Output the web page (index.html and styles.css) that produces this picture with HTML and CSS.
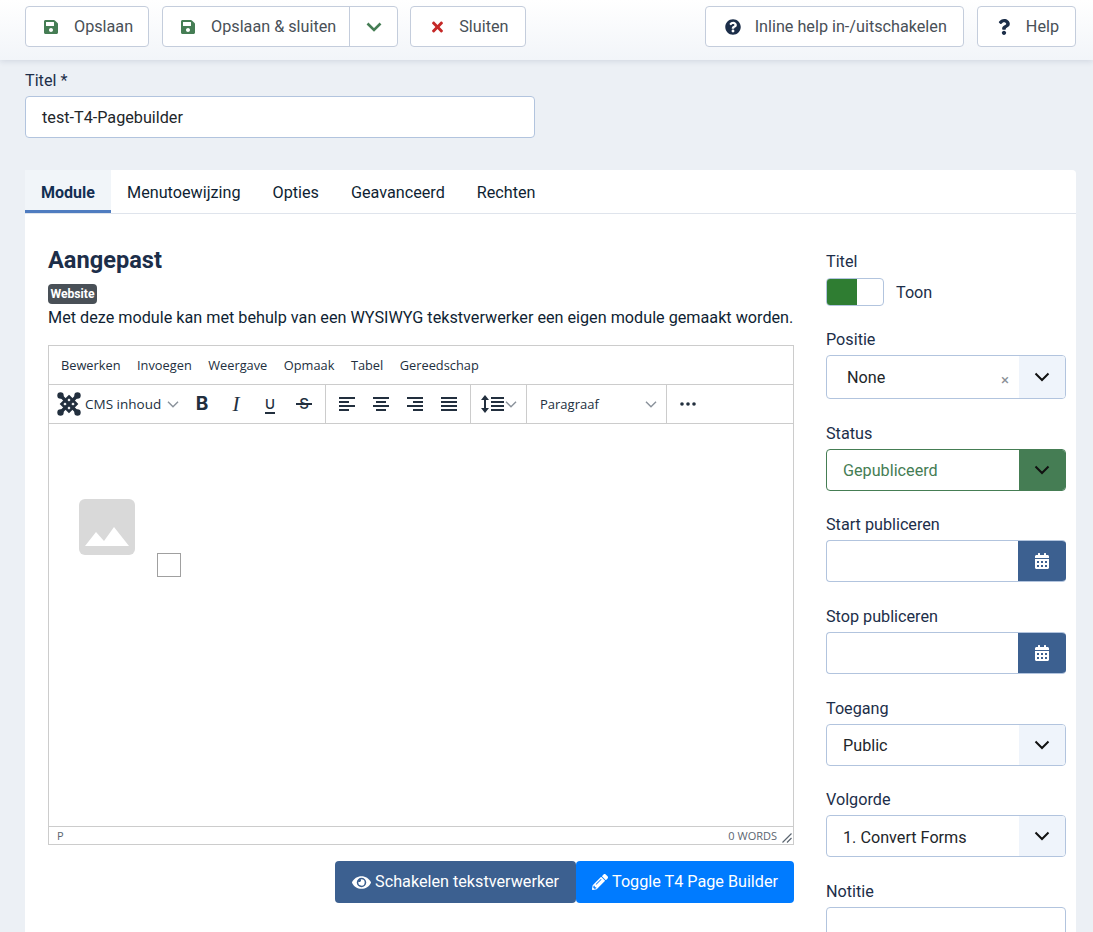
FILE: index.html
```html
<!DOCTYPE html>
<html lang="nl">
<head>
<meta charset="utf-8">
<title>Module bewerken</title>
<link rel="stylesheet" href="styles.css">
</head>
<body>
<svg class="defs" width="0" height="0" aria-hidden="true">
  <symbol id="i-save" viewBox="0 0 448 512"><path d="M433.941 129.941l-83.882-83.882A48 48 0 0 0 316.118 32H48C21.49 32 0 53.49 0 80v352c0 26.51 21.49 48 48 48h352c26.51 0 48-21.49 48-48V163.882a48 48 0 0 0-14.059-33.941zM224 416c-35.346 0-64-28.654-64-64 0-35.346 28.654-64 64-64s64 28.654 64 64c0 35.346-28.654 64-64 64zm96-304.52V212c0 6.627-5.373 12-12 12H76c-6.627 0-12-5.373-12-12V108c0-6.627 5.373-12 12-12h228.52c3.183 0 6.235 1.264 8.485 3.515l3.48 3.48A11.996 11.996 0 0 1 320 111.48z"/></symbol>
  <symbol id="i-cal" viewBox="0 0 448 512"><path d="M0 464c0 26.5 21.5 48 48 48h352c26.5 0 48-21.500 48-48V192H0v272zm320-196c0-6.600 5.400-12 12-12h40c6.600 0 12 5.400 12 12v40c0 6.600-5.400 12-12 12h-40c-6.600 0-12-5.400-12-12v-40zm0 128c0-6.600 5.400-12 12-12h40c6.600 0 12 5.400 12 12v40c0 6.600-5.400 12-12 12h-40c-6.600 0-12-5.400-12-12v-40zM192 268c0-6.600 5.400-12 12-12h40c6.600 0 12 5.400 12 12v40c0 6.600-5.400 12-12 12h-40c-6.600 0-12-5.400-12-12v-40zm0 128c0-6.600 5.400-12 12-12h40c6.600 0 12 5.400 12 12v40c0 6.600-5.400 12-12 12h-40c-6.600 0-12-5.400-12-12v-40zM64 268c0-6.600 5.400-12 12-12h40c6.600 0 12 5.400 12 12v40c0 6.600-5.400 12-12 12H76c-6.600 0-12-5.400-12-12v-40zm0 128c0-6.600 5.400-12 12-12h40c6.600 0 12 5.400 12 12v40c0 6.600-5.400 12-12 12H76c-6.600 0-12-5.400-12-12v-40zM400 64h-48V16c0-8.800-7.200-16-16-16h-32c-8.800 0-16 7.200-16 16v48H160V16c0-8.800-7.200-16-16-16h-32c-8.800 0-16 7.200-16 16v48H48C21.500 64 0 85.500 0 112v48h448v-48c0-26.500-21.500-48-48-48z"/></symbol>
  <symbol id="i-chev" viewBox="0 0 16 10"><path d="M1.500 1.500 8 8l6.500-6.500" fill="none" stroke="currentColor"/></symbol>
  <symbol id="i-tchev" viewBox="0 0 10 6"><path d="M.7.7 5 5 9.300.7" fill="none" stroke="currentColor" stroke-width="1.200"/></symbol>
</svg>

<header class="topbar">
  <div class="btn-row">
    <a class="btn btn-save"><svg class="ico save"><use href="#i-save"/></svg><span>Opslaan</span></a>
    <div class="btn split">
      <a class="split-main"><svg class="ico save"><use href="#i-save"/></svg><span>Opslaan &amp; sluiten</span></a>
      <a class="split-toggle"><svg class="top-chev"><use href="#i-chev"/></svg></a>
    </div>
    <a class="btn btn-close"><svg class="ico cross" viewBox="0 0 352 512"><path d="M242.720 256l100.070-100.070c12.280-12.280 12.280-32.190 0-44.480l-22.240-22.240c-12.280-12.280-32.190-12.280-44.480 0L176 189.280 75.930 89.210c-12.280-12.280-32.190-12.280-44.480 0L9.210 111.450c-12.280 12.280-12.280 32.190 0 44.480L109.280 256 9.210 356.070c-12.280 12.280-12.280 32.190 0 44.480l22.240 22.240c12.280 12.280 32.200 12.280 44.480 0L176 322.720l100.070 100.070c12.280 12.280 32.200 12.280 44.480 0l22.240-22.240c12.280-12.280 12.280-32.190 0-44.480L242.720 256z"/></svg><span>Sluiten</span></a>
  </div>
  <div class="btn-row">
    <a class="btn btn-inline"><svg class="ico qc" viewBox="0 0 512 512"><path d="M504 256c0 136.997-111.043 248-248 248S8 392.997 8 256C8 119.083 119.043 8 256 8s248 111.083 248 248zM262.655 90c-54.497 0-89.255 22.957-116.549 63.758-3.536 5.286-2.353 12.415 2.715 16.258l34.699 26.310c5.205 3.947 12.621 3.008 16.665-2.122 17.864-22.658 30.113-35.797 57.303-35.797 20.429 0 45.698 13.148 45.698 32.958 0 14.976-12.363 22.667-32.534 33.976C247.128 238.528 216 254.941 216 296v4c0 6.627 5.373 12 12 12h56c6.627 0 12-5.373 12-12v-1.333c0-28.462 83.186-29.647 83.186-106.667 0-58.002-60.165-102-116.531-102zM256 338c-25.365 0-46 20.635-46 46 0 25.364 20.635 46 46 46s46-20.636 46-46c0-25.365-20.635-46-46-46z"/></svg><span>Inline help in-/uitschakelen</span></a>
    <a class="btn btn-help"><svg class="ico q" viewBox="0 0 384 512"><path d="M202.021 0C122.202 0 70.503 32.703 29.914 91.026c-7.363 10.580-5.093 25.086 5.178 32.874l43.138 32.709c10.373 7.865 25.132 6.026 33.253-4.148 25.049-31.381 43.630-49.449 82.757-49.449 30.764 0 68.816 19.799 68.816 49.631 0 22.552-18.617 34.134-48.993 51.164-35.423 19.860-82.299 44.576-82.299 106.405V320c0 13.255 10.745 24 24 24h72.471c13.255 0 24-10.745 24-24v-5.773c0-42.860 125.268-44.645 125.268-160.627C377.504 66.256 286.902 0 202.021 0zM192 373.459c-38.196 0-69.271 31.075-69.271 69.271 0 38.195 31.075 69.270 69.271 69.270s69.271-31.075 69.271-69.271-31.075-69.270-69.271-69.270z"/></svg><span>Help</span></a>
  </div>
</header>

<main class="page">
  <label class="label">Titel *</label>
  <div class="title-input">test-T4-Pagebuilder</div>

  <section class="card">
    <nav class="tabs">
      <a class="tab active">Module</a>
      <a class="tab">Menutoewijzing</a>
      <a class="tab">Opties</a>
      <a class="tab">Geavanceerd</a>
      <a class="tab">Rechten</a>
    </nav>
    <div class="card-body">
      <div class="col-main">
        <h1 class="heading">Aangepast</h1>
        <span class="badge">Website</span>
        <p class="desc">Met deze module kan met behulp van een WYSIWYG tekstverwerker een eigen module gemaakt worden.</p>

        <div class="editor">
          <div class="menubar">
            <span>Bewerken</span><span>Invoegen</span><span>Weergave</span><span>Opmaak</span><span>Tabel</span><span>Gereedschap</span>
          </div>
          <div class="toolbar">
            <div class="tgroup g-text">
              <div class="cms">
                <svg class="joomla" viewBox="0 0 24 24"><g fill="none" stroke="#222f3e"><path class="j-x" d="M4 4 20 20M20 4 4 20"/><path class="j-d" d="M12 4.500 19.500 12 12 19.500 4.500 12Z"/></g><g fill="#222f3e"><circle cx="3.500" cy="3.500" r="3.200"/><circle cx="20.500" cy="3.500" r="3.200"/><circle cx="3.500" cy="20.500" r="3.200"/><circle cx="20.500" cy="20.500" r="3.200"/></g></svg>
                <span class="cms-label">CMS inhoud</span>
                <svg class="tchev"><use href="#i-tchev"/></svg>
              </div>
              <span class="tbtn tb-b">B</span>
              <span class="tbtn tb-i">I</span>
              <span class="tbtn tb-u">U</span>
              <span class="tbtn tb-s">S</span>
            </div>
            <div class="tgroup g-align">
              <span class="tbtn"><svg class="aln" viewBox="0 0 16 14"><path d="M0 1h16M0 5h10M0 9h16M0 13h10"/></svg></span>
              <span class="tbtn"><svg class="aln" viewBox="0 0 16 14"><path d="M0 1h16M3 5h10M0 9h16M3 13h10"/></svg></span>
              <span class="tbtn"><svg class="aln" viewBox="0 0 16 14"><path d="M0 1h16M6 5h10M0 9h16M6 13h10"/></svg></span>
              <span class="tbtn"><svg class="aln" viewBox="0 0 16 14"><path d="M0 1h16M0 5h16M0 9h16M0 13h16"/></svg></span>
            </div>
            <div class="tgroup g-line">
              <svg class="lineh" viewBox="0 0 24 18"><path class="lh-bars" d="M10 3h13M10 7h13M10 11h13M10 15h13"/><path class="lh-arrow" d="M4 3v12"/><path class="lh-head" d="M4 0 8 5H0zM4 18 0 13h8z"/></svg>
              <svg class="tchev"><use href="#i-tchev"/></svg>
            </div>
            <div class="tgroup g-para">
              <span>Paragraaf</span>
              <svg class="tchev"><use href="#i-tchev"/></svg>
            </div>
            <div class="tgroup g-more">
              <svg class="dots" viewBox="0 0 16 4"><circle cx="2" cy="2" r="1.800"/><circle cx="8" cy="2" r="1.800"/><circle cx="14" cy="2" r="1.800"/></svg>
            </div>
          </div>
          <div class="edit-area">
            <svg class="placeholder" viewBox="0 0 56 56"><rect width="56" height="56" rx="6" fill="#d9d9d9"/><path d="M6 47 17 33l8 9 10-14 15 19z" fill="#fff"/></svg>
            <div class="broken-box"></div>
          </div>
          <div class="statusbar">
            <span>P</span>
            <span class="words">0 WORDS</span>
            <svg class="grip" viewBox="0 0 10 10"><path d="M9.500 .5 .5 9.500M9.500 5 5 9.500" fill="none" stroke="#5b6570" stroke-width="1.200"/></svg>
          </div>
        </div>

        <div class="editor-actions">
          <a class="action dark"><svg class="a-eye" viewBox="0 0 576 512"><path d="M572.520 241.400C518.290 135.590 410.930 64 288 64S57.680 135.640 3.480 241.410a32.350 32.350 0 0 0 0 29.190C57.710 376.410 165.070 448 288 448s230.320-71.640 284.520-177.410a32.350 32.350 0 0 0 0-29.190zM288 400a144 144 0 1 1 144-144 143.930 143.930 0 0 1-144 144zm0-240a95.310 95.310 0 0 0-25.310 3.790 47.850 47.850 0 0 1-66.900 66.900A95.780 95.780 0 1 0 288 160z"/></svg><span>Schakelen tekstverwerker</span></a>
          <a class="action blue"><svg class="a-pen" viewBox="0 0 512 512"><path d="M497.900 142.100l-46.100 46.100c-4.700 4.700-12.300 4.700-17 0l-111-111c-4.700-4.700-4.700-12.300 0-17l46.100-46.100c18.700-18.700 49.100-18.700 67.900 0l60.100 60.100c18.800 18.700 18.800 49.100 0 67.900zM284.200 99.800L21.600 362.400.4 483.900c-2.900 16.400 11.400 30.600 27.800 27.800l121.500-21.300 262.600-262.600c4.700-4.700 4.700-12.300 0-17l-111-111c-4.800-4.700-12.400-4.700-17.100 0zM124.100 339.900c-5.500-5.500-5.500-14.300 0-19.800l154-154c5.500-5.500 14.300-5.500 19.800 0s5.500 14.300 0 19.800l-154 154c-5.500 5.500-14.300 5.500-19.800 0zM88 424h48v36.300l-64.500 11.300-31.100-31.100L51.700 376H88v48z"/></svg><span>Toggle T4 Page Builder</span></a>
        </div>
      </div>

      <aside class="col-side">
        <div class="field field-toggle">
          <label class="label label-toggle">Titel</label>
          <div class="toggle-row">
            <div class="toggle"><span class="toggle-on"></span></div>
            <span>Toon</span>
          </div>
        </div>
        <div class="field">
          <label class="label">Positie</label>
          <div class="select select-tall">
            <span class="val val-indent">None</span>
            <span class="clear">×</span>
            <span class="arrow"><svg class="sel-chev"><use href="#i-chev"/></svg></span>
          </div>
        </div>
        <div class="field">
          <label class="label">Status</label>
          <div class="select select-ok">
            <span class="val">Gepubliceerd</span>
            <span class="arrow"><svg class="sel-chev"><use href="#i-chev"/></svg></span>
          </div>
        </div>
        <div class="field">
          <label class="label">Start publiceren</label>
          <div class="select date">
            <span class="val"></span>
            <span class="cal"><svg class="cal-ico"><use href="#i-cal"/></svg></span>
          </div>
        </div>
        <div class="field">
          <label class="label">Stop publiceren</label>
          <div class="select date">
            <span class="val"></span>
            <span class="cal"><svg class="cal-ico"><use href="#i-cal"/></svg></span>
          </div>
        </div>
        <div class="field">
          <label class="label">Toegang</label>
          <div class="select">
            <span class="val">Public</span>
            <span class="arrow"><svg class="sel-chev"><use href="#i-chev"/></svg></span>
          </div>
        </div>
        <div class="field">
          <label class="label">Volgorde</label>
          <div class="select">
            <span class="val">1. Convert Forms</span>
            <span class="arrow"><svg class="sel-chev"><use href="#i-chev"/></svg></span>
          </div>
        </div>
        <div class="field">
          <label class="label">Notitie</label>
          <div class="select"><span class="val"></span></div>
        </div>
      </aside>
    </div>
  </section>
</main>
</body>
</html>
```

FILE: styles.css
```css
* { box-sizing: border-box; }
html, body { height: 932px; overflow: hidden; }
body {
  margin: 0;
  background: #ecf0f5;
  color: #22262a;
  font: 16.200px/24px Roboto, "Liberation Sans", sans-serif;
}
.defs { position: absolute; }

/* top bar */
.topbar {
  height: 60px;
  padding: 6px 17px 0 25px;
  display: flex;
  justify-content: space-between;
  background: linear-gradient(#ffffff, #f2f5f9);
  box-shadow: 0 1px 6px rgba(30, 50, 90, .14);
  position: relative;
}
.btn-row { display: flex; gap: 13px; }
.btn {
  height: 41px;
  display: flex;
  align-items: center;
  background: #fff;
  border: 1px solid #c4cddc;
  border-radius: 4px;
  color: #495057;
  padding: 1px 15px 0 17px;
  gap: 16px;
}
.btn-save { padding: 1px 15px 0 18px; }
.btn-row:first-child .btn-close { margin-left: -1px; padding: 1px 17px 0 20px; gap: 15px; }
.ico { width: 14px; height: 16px; flex: none; }
.save { fill: #457d54; }
.cross { fill: #c52827; width: 13px; }
.qc { fill: #1c2e49; width: 16px; height: 16px; }
.q { fill: #1c2e49; width: 12px; height: 16px; }
.btn-inline { padding: 1px 16px 0 19px; gap: 14px; }
.btn-help { padding: 1px 16px 0 20px; gap: 16px; }
.split { padding: 0; gap: 0; }
.split-main {
  display: flex;
  align-items: center;
  height: 100%;
  padding: 1px 13px 0 18px;
  gap: 16px;
  border-right: 1px solid #c4cddc;
}
.split-toggle { width: 47px; display: flex; justify-content: center; align-items: center; }
.top-chev { width: 16px; height: 10px; color: #457d54; stroke-width: 2.600; }

/* page */
.page { padding: 8px 17px 0 25px; }
.label { display: block; color: #1c2e49; margin-bottom: 4px; padding-top: 1px; height: 24px; }
.title-input {
  width: 510px;
  height: 42px;
  padding: 9px 16px 0;
  background: #fff;
  border: 1px solid #b2c4de;
  border-radius: 4px;
  color: #22262a;
}

/* card */
.card {
  margin-top: 32px;
  background: #fff;
  border-radius: 4px 4px 0 0;
}
.tabs {
  height: 44px;
  display: flex;
  border-bottom: 1px solid #dfe4ec;
}
.tab {
  height: 43px;
  padding: 11px 16px 0;
  color: #0f1f33;
  font-weight: 400;
}
.tab.active {
  width: 86px;
  background: #f1f5f9;
  color: #132f53;
  font-size: 16px;
  font-weight: 700;
  border-bottom: 3px solid #4f7cc0;
}
.card-body {
  display: flex;
  padding: 35px 10px 0 23px;
  gap: 32px;
}
.col-main { width: 746px; flex: none; }
.col-side { width: 240px; flex: none; }

.heading {
  margin: -3px 0 10px;
  font-size: 23.600px;
  line-height: 28px;
  font-weight: 700;
  color: #1c2e49;
}
.badge {
  display: block;
  width: 49px;
  height: 20px;
  background: #495057;
  color: #fff;
  font-size: 12.200px;
  line-height: 21px;
  font-weight: 700;
  text-align: center;
  border-radius: 4px;
}
.desc { margin: 1px 0 16px; padding-top: 1px; height: 24px; color: #0f1f33; }

/* editor */
.editor {
  height: 500px;
  border: 1px solid #cccccc;
  display: flex;
  flex-direction: column;
  font-family: "Open Sans", "Noto Sans", sans-serif;
  font-size: 13px;
  color: #222f3e;
}
.menubar {
  height: 39px;
  flex: none;
  display: flex;
  align-items: center;
  gap: 16.500px;
  padding-left: 12px;
  border-bottom: 1px solid #cccccc;
  font-size: 12.800px;
}
.toolbar {
  height: 39px;
  flex: none;
  display: flex;
  border-bottom: 1px solid #cccccc;
}
.tgroup {
  display: flex;
  align-items: center;
  height: 100%;
  border-right: 1px solid #cccccc;
  padding: 0 4px;
}
.g-text { width: 277px; }
.g-align { width: 145px; }
.g-line { width: 56px; padding: 0 0 0 10px; }
.g-para { width: 140px; padding: 0 9px 0 13px; justify-content: space-between; }
.g-more { border-right: 0; padding-left: 13px; }
.cms { width: 132px; display: flex; align-items: center; padding-left: 4px; }
.joomla { width: 24px; height: 24px; flex: none; }
.j-x { stroke-width: 3.400; }
.j-d { stroke-width: 2.600; }
.cms-label { margin-left: 4px; width: 82px; font-size: 13.500px; }
.tchev { width: 12px; height: 7px; color: #8a929b; flex: none; }
.tbtn {
  width: 34px;
  height: 28px;
  display: flex;
  align-items: center;
  justify-content: center;
  color: #222f3e;
  position: relative;
}
.tb-b { font: 700 19px/28px Inter, sans-serif; }
.tb-i { font: italic 400 21px/28px "Liberation Serif", serif; }
.tb-u { font: 500 13.500px/28px Inter, sans-serif; text-decoration: underline; text-decoration-thickness: 2px; text-underline-offset: 3px; }
.tb-s { font: 500 15px/28px Inter, sans-serif; }
.tb-s::after {
  content: "";
  position: absolute;
  left: 9px;
  top: 13px;
  width: 16px;
  height: 2px;
  background: #222f3e;
}
.aln { width: 16px; height: 14px; fill: none; stroke: #222f3e; stroke-width: 2; }
.lineh { width: 24px; height: 18px; flex: none; }
.lh-bars { stroke: #222f3e; stroke-width: 2; fill: none; }
.lh-arrow { stroke: #222f3e; stroke-width: 2; fill: none; }
.lh-head { fill: #222f3e; }
.dots { width: 16px; height: 4px; fill: #222f3e; }
.edit-area {
  flex: 1;
  position: relative;
}
.placeholder { position: absolute; left: 30px; top: 75px; width: 56px; height: 56px; }
.broken-box {
  position: absolute;
  left: 108px;
  top: 129px;
  width: 24px;
  height: 24px;
  border: 1px solid #a0a0a0;
}
.statusbar {
  height: 18px;
  flex: none;
  display: flex;
  align-items: center;
  border-top: 1px solid #cccccc;
  padding: 0 16px 0 8px;
  font-size: 11px;
  line-height: 17px;
  color: #5b6570;
  position: relative;
}
.words { margin-left: auto; }
.grip { position: absolute; right: 1px; bottom: 1px; width: 10px; height: 10px; }
.editor-actions {
  display: flex;
  justify-content: flex-end;
  margin-top: 16px;
}
.action {
  height: 42px;
  display: flex;
  align-items: center;
  gap: 4px;
  padding: 0 16px;
  color: #fff;
  border-radius: 4px;
}
.action.dark { background: #3c6090; padding-left: 17px; padding-right: 17px; }
.action.blue { background: #007bff; }
.a-eye { width: 19px; height: 17px; fill: #fff; }
.a-pen { width: 16px; height: 16px; fill: #fff; }

/* side column */
.field { margin-bottom: 21.700px; }
.field-toggle { margin-bottom: 20.900px; }
.label-toggle { margin-bottom: 5px; }
.toggle-row { display: flex; align-items: center; gap: 12px; height: 28px; color: #1c2e49; }
.toggle {
  width: 58px;
  height: 28px;
  border: 1px solid #b2c4de;
  border-radius: 4px;
  background: #fff;
  overflow: hidden;
}
.toggle-on { display: block; width: 30px; height: 100%; background: #2f7d32; }
.toggle-row span:last-child { padding-top: 1px; }
.select {
  height: 42px;
  display: flex;
  align-items: stretch;
  background: #fff;
  border: 1px solid #b2c4de;
  border-radius: 4px;
  overflow: hidden;
  color: #22262a;
  position: relative;
}
.select-tall { height: 44px; }
.val { flex: 1; padding: 9.400px 16px 0; }
.val-indent { padding: 10px 16px 0 20px; }
.clear {
  position: absolute;
  right: 56px;
  top: 12px;
  color: #8a8f96;
  font-size: 15px;
}
.arrow {
  width: 46px;
  flex: none;
  display: flex;
  align-items: center;
  justify-content: center;
  background: #eff4fb;
  color: #111;
  padding-right: 1px;
}
.sel-chev { width: 16px; height: 10px; stroke-width: 2; }
.select-ok { border-color: #457d54; }
.select-ok .val { color: #457d54; }
.select-ok .arrow { background: #457d54; }
.date { border-right: 0; }
.cal {
  width: 48px;
  flex: none;
  display: flex;
  align-items: center;
  justify-content: center;
  background: #3c6090;
  margin: -1px 0;
}
.cal-ico { width: 14px; height: 16px; fill: #fff; }
```
